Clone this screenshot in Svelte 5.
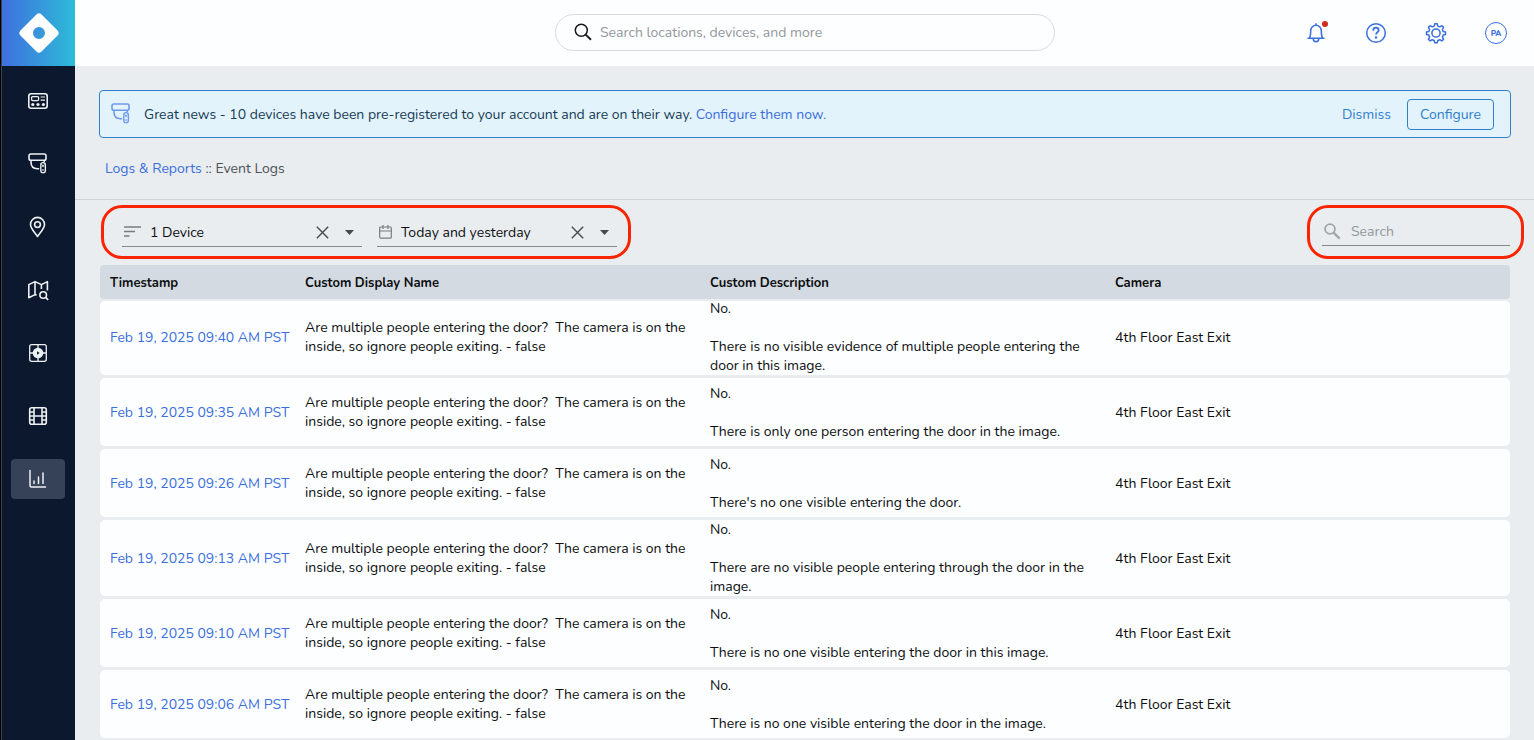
<script>
  const nav = [
    { name: 'Dashboard', icon: 'dashboard' },
    { name: 'Devices', icon: 'camera' },
    { name: 'Locations', icon: 'pin' },
    { name: 'Map search', icon: 'map' },
    { name: 'Live view', icon: 'play' },
    { name: 'Clips', icon: 'film' },
    { name: 'Logs & Reports', icon: 'chart' }
  ];
  let active = $state('chart');

  const question =
    'Are multiple people entering the door?\u00a0 The camera is on the inside, so ignore people exiting. - false';
  const events = [
    { time: '09:40', text: 'There is no visible evidence of multiple people entering the door in this image.' },
    { time: '09:35', text: 'There is only one person entering the door in the image.' },
    { time: '09:26', text: "There's no one visible entering the door." },
    { time: '09:13', text: 'There are no visible people entering through the door in the image.' },
    { time: '09:10', text: 'There is no one visible entering the door in this image.' },
    { time: '09:06', text: 'There is no one visible entering the door in the image.' }
  ];

  let device = $state('1 Device');
  let range = $state('Today and yesterday');
</script>

{#snippet cameraIcon()}
  <svg width="20" height="22" viewBox="0 0 20 22" fill="none" stroke="currentColor" stroke-width="1.6">
    <rect x="1" y="1" width="17" height="6.200" rx="1.800" />
    <path d="M3 7.500V9c0 4.200 2.600 6.700 6.400 6.700h1.800" />
    <path d="M16.200 7.500v1.500" />
    <rect x="12.800" y="9.600" width="4.600" height="10" rx="2.200" stroke-width="1.300" />
    <path d="M13.500 11.500l3 2.500M13.500 14l3-2.500M13.500 17h3" stroke-width="1" />
  </svg>
{/snippet}

{#snippet clearIcon()}
  <svg width="13" height="13" viewBox="0 0 13 13" fill="none" stroke="#444a4e" stroke-width="1.4">
    <path d="M0.800 0.800l11.400 11.400M12.200 0.800L0.800 12.200" />
  </svg>
{/snippet}

{#snippet caret()}
  <svg class="caret" width="9" height="5" viewBox="0 0 9 5" aria-hidden="true"><path d="M0 0h9L4.500 5z" fill="#444a4e" /></svg>
{/snippet}

<div class="app">
  <aside class="side">
    <a class="logo" href="#home" aria-label="Home">
      <svg width="40" height="40" viewBox="0 0 40 40">
        <path fill="#fff" fill-rule="evenodd" d="M17.700 1.200Q20-.6 22.300 1.200L38.800 17.700Q40.600 20 38.800 22.300L22.300 38.800Q20 40.600 17.700 38.800L1.200 22.300Q-.6 20 1.200 17.700ZM20 14a6 6 0 1 0 0 12a6 6 0 1 0 0-12z" />
      </svg>
    </a>
    <nav aria-label="Main">
      {#each nav as item}
        <button class="nav-item" class:active={active === item.icon} aria-label={item.name} onclick={() => (active = item.icon)}>
          {#if item.icon === 'dashboard'}
            <svg width="20" height="16" viewBox="0 0 20 16" fill="none" stroke="currentColor" stroke-width="1.6">
              <rect x="0.800" y="0.800" width="18.400" height="14.400" rx="2.400" />
              <rect x="3.600" y="3.600" width="7" height="4" rx="1" stroke-width="1.300" />
              <path d="M12.600 4H17M12.600 7.200H17" stroke-width="1.200" />
              <g fill="currentColor" stroke="none"><circle cx="4.800" cy="11.500" r="1.600" /><circle cx="10" cy="11.500" r="1.600" /><circle cx="15.400" cy="11.500" r="1.600" /></g>
            </svg>
          {:else if item.icon === 'camera'}
            {@render cameraIcon()}
          {:else if item.icon === 'pin'}
            <svg width="18" height="22" viewBox="0 0 18 22" fill="none" stroke="currentColor" stroke-width="1.600" stroke-linejoin="round">
              <path d="M8.500 20.500C6.500 17 1.500 12.800 1.500 8.400a7 7 0 0 1 14 0C15.500 12.800 10.500 17 8.500 20.500z" />
              <circle cx="8.500" cy="8.600" r="2.900" />
            </svg>
          {:else if item.icon === 'map'}
            <svg width="22" height="22" viewBox="0 0 22 22" fill="none" stroke="currentColor" stroke-width="1.600" stroke-linejoin="round">
              <path d="M9.600 16L8 15.600L1.800 18.700V5.600l6.200-3 6.400 3 6-3v9M8 2.600v13M14.400 5.600v4.500" />
              <circle cx="16.200" cy="16" r="3.300" />
              <path d="M18.600 18.300l2.600 2.500" />
            </svg>
          {:else if item.icon === 'play'}
            <svg width="20" height="20" viewBox="0 0 20 20" fill="none" stroke="currentColor" stroke-width="1.300">
              <rect x="1.700" y="1.700" width="16.600" height="16.600" rx="2" />
              <path d="M10 2v16M2 10h16" />
              <circle cx="10" cy="10" r="5.300" fill="currentColor" stroke="none" />
              <path d="M9 8.300l2.600 1.700-2.600 1.700z" fill="#0c182d" stroke="none" />
            </svg>
          {:else if item.icon === 'film'}
            <svg width="20" height="20" viewBox="0 0 20 20" fill="none" stroke="currentColor" stroke-width="1.600">
              <rect x="1.700" y="1.700" width="16.600" height="16.600" rx="2" />
              <path d="M6 2v16M14 2v16M6 10h8M2 6h4M2 10h4M2 14h4M14 6h4M14 10h4M14 14h4" />
            </svg>
          {:else}
            <svg width="20" height="20" viewBox="0 0 20 20" fill="none" stroke="currentColor" stroke-width="1.500" stroke-linecap="round">
              <path d="M2 1.500V16.500a1.500 1.500 0 0 0 1.500 1.500H17.500M6 12v2.500M10.500 8v6.500M15 4v10.500" />
            </svg>
          {/if}
        </button>
      {/each}
    </nav>
  </aside>

  <div class="page">
    <header>
      <label class="global-search">
        <svg width="18" height="18" viewBox="0 0 18 18" fill="none" stroke="#16181a" stroke-width="1.500" aria-hidden="true">
          <circle cx="7.300" cy="7.300" r="6" /><path d="M11.600 11.600l5.400 5.200" stroke-width="1.900" />
        </svg>
        <input type="search" aria-label="Search everything" placeholder="Search locations, devices, and more" />
      </label>
      <div class="actions">
        <button aria-label="Notifications">
          <svg width="20" height="22" viewBox="0 0 20 22" fill="none" stroke="currentColor" stroke-width="1.500" stroke-linejoin="round">
            <path d="M1.500 16.300h17M3.300 16.300c1-1.500 1.400-3.500 1.400-7.300 0-3 2.200-5.700 5.300-5.700S15.300 6 15.300 9c0 3.800.4 5.800 1.400 7.300M10 3.300V1.300M7.200 16.600a2.800 3.200 0 0 0 5.600 0" />
          </svg>
          <span class="dot"></span>
        </button>
        <button aria-label="Help">
          <svg width="22" height="22" viewBox="0 0 22 22" fill="none" stroke="currentColor" stroke-width="1.500">
            <circle cx="11" cy="11" r="9.300" />
            <path d="M8.300 8.800V8.200a2.700 2.500 0 0 1 5.400 0c0 2-2.700 2-2.700 4.300" stroke-width="1.800" />
            <circle cx="11" cy="15.500" r="1.200" fill="currentColor" stroke="none" />
          </svg>
        </button>
        <button aria-label="Settings">
          <svg width="22" height="22" viewBox="0 0 22 22" fill="none" stroke="currentColor" stroke-width="1.500" stroke-linejoin="round">
            <circle cx="11" cy="11" r="4.100" />
            <path d="M9.800 1.800h2.400l.6 2.300 2 .8 2.100-1.200 1.700 1.700-1.200 2.100.8 2 2.300.6v2.400l-2.300.6-.8 2 1.200 2.100-1.700 1.700-2.100-1.200-2 .8-.6 2.300H9.800l-.6-2.300-2-.8-2.100 1.200-1.700-1.700 1.200-2.100-.8-2-2.300-.6v-2.400l2.300-.6.8-2-1.200-2.100 1.700-1.700 2.100 1.200 2-.8z" />
          </svg>
        </button>
        <button class="avatar" aria-label="Profile PA">PA</button>
      </div>
    </header>

    <main>
      <section class="notice">
        {@render cameraIcon()}
        <p>Great news - 10 devices have been pre-registered to your account and are on their way. <a href="#configure">Configure them now.</a></p>
        <button class="dismiss">Dismiss</button>
        <button class="configure">Configure</button>
      </section>

      <div class="crumbs"><a href="#logs">Logs &amp; Reports</a> :: Event Logs</div>

      <div class="toolbar">
        <div class="ring filters">
          <div class="field">
            <svg width="17" height="12" viewBox="0 0 17 12" fill="none" stroke="#777c80" stroke-width="1.600" aria-hidden="true"><path d="M0 1h17M0 5.500h11M0 10h5.500" /></svg>
            <select aria-label="Device" bind:value={device}><option>1 Device</option><option value="">All devices</option></select>
            <button aria-label="Clear device" onclick={() => (device = '')}>{@render clearIcon()}</button>
            {@render caret()}
          </div>
          <div class="field">
            <svg width="13" height="14" viewBox="0 0 13 14" fill="none" stroke="#777c80" stroke-width="1.200" aria-hidden="true">
              <rect x="0.700" y="2" width="11.600" height="11.200" rx="1" /><path d="M0.700 6h11.600M4 0v4M9 0v4" />
            </svg>
            <select aria-label="Date range" bind:value={range}><option>Today and yesterday</option><option value="">Any date</option></select>
            <button aria-label="Clear date range" onclick={() => (range = '')}>{@render clearIcon()}</button>
            {@render caret()}
          </div>
        </div>
        <div class="ring finder">
          <label class="field">
            <svg width="17" height="17" viewBox="0 0 17 17" fill="none" stroke="#a0a4a6" stroke-width="1.800" aria-hidden="true"><circle cx="6" cy="6" r="4.900" /><path d="M9.600 9.600l6 6" stroke-width="2.200" /></svg>
            <input type="search" aria-label="Search events" placeholder="Search" />
          </label>
        </div>
      </div>

      <table>
        <thead>
          <tr><th>Timestamp</th><th>Custom Display Name</th><th>Custom Description</th><th>Camera</th></tr>
        </thead>
        <tbody>
          {#each events as event}
            <tr>
              <td><a href="#event">Feb 19, 2025 {event.time} AM PST</a></td>
              <td>{question}</td>
              <td><p>No.</p><p>{event.text}</p></td>
              <td>4th Floor East Exit</td>
            </tr>
          {/each}
        </tbody>
      </table>
    </main>
  </div>
</div>

<style>
  :global(body) { background: #e9edf0; }
  .app, .app * { box-sizing: border-box; }
  .app {
    display: flex;
    height: 100vh;
    overflow: hidden;
    font: 14px/19px Nunito, "Open Sans", sans-serif;
    color: #0c0e10;
  }
  a { color: #3a6fdc; text-decoration: none; }
  p { margin: 0; }
  button, input, select { font: inherit; color: inherit; background: none; border: 0; padding: 0; margin: 0; outline: 0; }
  button { cursor: pointer; }
  svg { display: block; flex: none; }

  .side { flex: none; width: 75px; background: #0c182d; border-left: 1px solid #000; box-shadow: inset 1px 0 #3c444f; }
  .logo { display: flex; align-items: center; justify-content: center; height: 66px; margin-left: 1px; background: linear-gradient(90deg, #3f70df, #2dbbd8); }
  nav { display: flex; flex-direction: column; align-items: center; gap: 23px; padding-top: 15px; }
  .nav-item { display: flex; align-items: center; justify-content: center; width: 54px; height: 40px; border-radius: 4px; color: #eef1f4; }
  .nav-item.active { background: #354258; }

  .page { flex: 1; min-width: 0; display: flex; flex-direction: column; }
  header { flex: none; height: 66px; display: grid; grid-template-columns: 1fr 500px 1fr; align-items: center; background: #fdfeff; padding: 0 27px 0 28px; }
  .global-search { grid-column: 2; display: flex; align-items: center; gap: 8px; height: 37px; margin-bottom: 2px; padding: 0 18px; border: 1px solid #d7dade; border-radius: 19px; }
  input { flex: 1; width: 0; min-width: 0; appearance: none; }
  input::placeholder { color: #93979a; opacity: 1; }
  .actions { display: flex; justify-content: flex-end; gap: 38px; color: #3a6fdc; }
  .actions button { position: relative; width: 22px; height: 22px; display: flex; align-items: center; justify-content: center; }
  .dot { position: absolute; top: -1px; right: -1px; width: 6px; height: 6px; border-radius: 50%; background: #d02a1c; }
  .actions .avatar { border: 1px solid #3a6fdc; border-radius: 50%; font-size: 8px; font-weight: 800; }

  main { flex: 1; min-height: 0; padding-top: 24px; }
  .notice { display: flex; align-items: center; height: 48px; margin: 0 23px 0 24px; padding: 0 16px 0 11px; background: #e3f3fc; border: 1px solid #2f80cc; border-radius: 4px; color: #163c55; }
  .notice > svg { color: #6f99ea; }
  .notice p { flex: 1; margin-left: 13px; }
  .dismiss, .configure { color: #2f80cc; }
  .configure { height: 31px; padding: 0 12px; margin-left: 16px; border: 1px solid #2f80cc; border-radius: 4px; }
  .crumbs { height: 62px; padding: 21px 30px 0; border-bottom: 1px solid #cdd2d6; color: #4d5256; }

  .toolbar { display: flex; justify-content: space-between; padding: 5px 10px 6px 26px; }
  .ring { height: 54px; border: 3px solid #f92500; border-radius: 21px; display: flex; }
  .filters { gap: 15px; padding: 0 11px 0 18px; }
  .finder { width: 217px; padding: 0 11px 0 12px; }
  .field { flex: 1; min-width: 0; display: flex; align-items: center; height: 39px; padding: 10px 8px 0 2px; border-bottom: 1px solid #85898c; }
  .filters .field { flex: none; width: 240px; }
  .field select { flex: 1; min-width: 0; appearance: none; margin-left: 9px; }
  .field .caret { margin-left: 16px; }
  .finder .field { height: 38px; }
  .finder .field input { margin-left: 10px; }

  table { display: block; margin: 0 24px 0 25px; }
  thead, tr { display: grid; }
  tr { grid-template-columns: 195px repeat(3, 1fr); align-items: center; }
  th, td { padding: 0 0 0 10px; text-align: left; }
  thead tr { height: 34px; padding-top: 2px; background: #d4dae2; border-radius: 4px; }
  th { font-size: 13px; font-weight: 700; }
  tbody { display: flex; flex-direction: column; gap: 3px; }
  tbody tr { flex: none; min-height: 68px; background: #fdfeff; border-radius: 5px; }
  tbody tr:first-child { clip-path: inset(2px 0 0 round 5px); }
  td p + p { margin-top: 19px; }
</style>
